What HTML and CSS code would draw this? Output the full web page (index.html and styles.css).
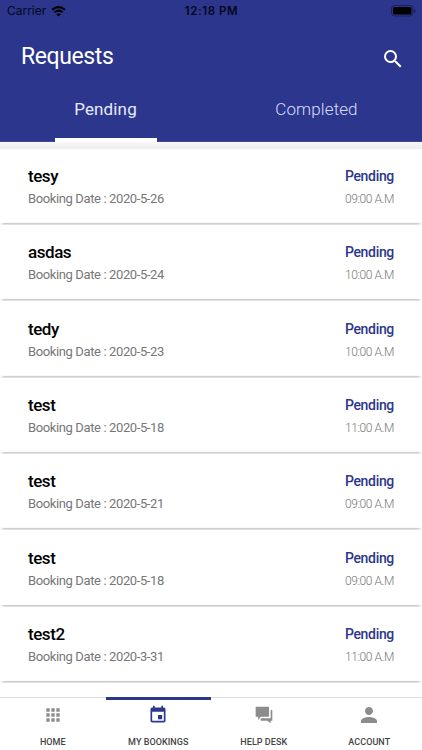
FILE: index.html
```html
<!DOCTYPE html>
<html lang="en">
<head>
<meta charset="utf-8">
<title>Requests</title>
<link rel="stylesheet" href="styles.css">
</head>
<body>
<div class="app">
  <header class="header">
    <div class="status">
      <div class="carrier"><span>Carrier</span>
        <svg class="wifi" viewBox="0 0 16 12"><path d="M8 11.500 10.500 8.900Q8 7 5.500 8.900Z"/><path d="M3.500 6.800Q8 3.300 12.500 6.800M1 4.100Q8 -1.700 15 4.100" fill="none" stroke="#000" stroke-width="2.300"/></svg>
      </div>
      <span class="clock">12:18 PM</span>
      <svg class="battery" viewBox="0 0 25 12"><rect x=".5" y=".5" width="21.500" height="10.500" rx="3" fill="none" stroke="#000" stroke-opacity=".4"/><rect x="2" y="2" width="18.500" height="7.500" rx="1.600"/><path d="M23.300 4v4q1.200-.6 1.200-2t-1.200-2" opacity=".5"/></svg>
    </div>
    <div class="titlebar">
      <h1>Requests</h1>
      <svg class="search" viewBox="0 0 24 24"><path d="M15.500 14h-.79l-.28-.27A6.471 6.471 0 0 0 16 9.500 6.500 6.500 0 1 0 9.500 16c1.610 0 3.090-.59 4.230-1.570l.27.28v.79l5 4.990L20.490 19l-4.990-5zm-6 0C7.010 14 5 11.990 5 9.500S7.010 5 9.500 5 14 7.010 14 9.500 11.990 14 9.500 14z"/></svg>
    </div>
    <nav class="tabs">
      <div class="tab active"><span>Pending</span></div>
      <div class="tab completed"><span>Completed</span></div>
    </nav>
  </header>
  <main class="list">
    <article class="row"><div><h2>tesy</h2><p>Booking Date : 2020-5-26</p></div><div class="side"><strong>Pending</strong><time>09:00 A.M</time></div></article>
    <article class="row"><div><h2>asdas</h2><p>Booking Date : 2020-5-24</p></div><div class="side"><strong>Pending</strong><time>10:00 A.M</time></div></article>
    <article class="row"><div><h2>tedy</h2><p>Booking Date : 2020-5-23</p></div><div class="side"><strong>Pending</strong><time>10:00 A.M</time></div></article>
    <article class="row"><div><h2>test</h2><p>Booking Date : 2020-5-18</p></div><div class="side"><strong>Pending</strong><time>11:00 A.M</time></div></article>
    <article class="row"><div><h2>test</h2><p>Booking Date : 2020-5-21</p></div><div class="side"><strong>Pending</strong><time>09:00 A.M</time></div></article>
    <article class="row"><div><h2>test</h2><p>Booking Date : 2020-5-18</p></div><div class="side"><strong>Pending</strong><time>09:00 A.M</time></div></article>
    <article class="row"><div><h2>test2</h2><p>Booking Date : 2020-3-31</p></div><div class="side"><strong>Pending</strong><time>11:00 A.M</time></div></article>
  </main>
  <nav class="bottom">
    <div class="item"><svg viewBox="0 0 24 24"><path d="M4 8h4V4H4v4zm6 12h4v-4h-4v4zm-6 0h4v-4H4v4zm0-6h4v-4H4v4zm6 0h4v-4h-4v4zm6-10v4h4V4h-4zm-6 4h4V4h-4v4zm6 6h4v-4h-4v4zm0 6h4v-4h-4v4z"/></svg><span>HOME</span></div>
    <div class="item current"><svg viewBox="0 0 24 24"><path d="M17 12h-5v5h5v-5zM16 1v2H8V1H6v2H5c-1.110 0-1.990.9-1.990 2L3 19a2 2 0 0 0 2 2h14c1.100 0 2-.9 2-2V5c0-1.100-.9-2-2-2h-1V1h-2zm3 18H5V8h14v11z"/></svg><span>MY BOOKINGS</span></div>
    <div class="item"><svg viewBox="0 0 24 24"><path d="M2 2h16v12H8l-3 4v-4H2zM20 6h2v13h-2v3l-4-3H8v-3h12z"/></svg><span>HELP DESK</span></div>
    <div class="item"><svg viewBox="2 2 20 20"><path d="M12 12c2.210 0 4-1.790 4-4s-1.790-4-4-4-4 1.790-4 4 1.790 4 4 4zm0 2c-2.670 0-8 1.340-8 4v2h16v-2c0-2.660-5.330-4-8-4z"/></svg><span>ACCOUNT</span></div>
  </nav>
</div>
</body>
</html>
```
FILE: styles.css
```css
* { box-sizing: border-box; }
body { margin: 0; font-family: Roboto, sans-serif; background: #fff; }
.app { width: 422px; height: 750px; display: flex; flex-direction: column; overflow: hidden; }
.header { height: 142px; flex: none; background: #2c368c; box-shadow: inset 0 -1px #494791; display: flex; flex-direction: column; }
.status { height: 22px; padding: 0 6px 0 7px; display: grid; grid-template-columns: 1fr auto 1fr; align-items: center; font: 12px/22px Inter, sans-serif; color: #05071c; }
.carrier { display: flex; align-items: center; gap: 5px; letter-spacing: -.02px; }
.wifi { width: 15px; height: 11px; }
.clock { font-weight: 600; font-size: 11.500px; letter-spacing: .6px; }
.battery { width: 25px; height: 12px; justify-self: end; }
.titlebar { height: 69px; padding: 0 17px 0 21px; display: flex; justify-content: space-between; align-items: center; }
h1 { margin: 1px 0 0; font-size: 23px; line-height: 28px; font-weight: 400; letter-spacing: -.4px; color: #fff; }
.search { width: 24px; height: 24px; fill: #fff; margin-top: 5px; }
.tabs { height: 51px; flex: none; display: grid; grid-template-columns: 1fr 1fr; }
.tab { display: flex; justify-content: center; font-size: 17px; line-height: 37px; letter-spacing: .15px; color: #e8eaff; }
.active span { width: 102px; height: 51px; text-align: center; border-bottom: 4px solid #fff; }
.completed { font-weight: 300; letter-spacing: .1px; color: #d8dcff; }
.list { flex: 1; min-height: 0; padding-top: 7px; background: linear-gradient(#f7f8fa, #eceef0 7px, #fff 8px); }
.row { height: 76.330px; padding: 16px 28px 0; display: flex; justify-content: space-between; background: linear-gradient(90deg, #fff, transparent 4px calc(100% - 4px), #fff), linear-gradient(#fff 73.400px, #cdcdcd 74.300px, #d8d8d8 75.300px, #fff 76.330px); }
h2 { margin: 0; font-size: 17px; line-height: 23px; font-weight: 500; letter-spacing: -.45px; color: #000; }
p { margin: 3px 0 0; font-size: 13px; line-height: 16px; letter-spacing: -.38px; color: #777; }
.side { display: flex; flex-direction: column; align-items: flex-end; }
.side strong { font-size: 14px; line-height: 22px; font-weight: 500; letter-spacing: -.32px; color: #2c368c; }
time { margin-top: 4px; font-size: 12px; line-height: 16px; font-weight: 300; letter-spacing: -.42px; color: #777; }
.bottom { height: 53px; flex: none; display: grid; grid-template-columns: repeat(4, 1fr); background: #fff; }
.item { border-top: 1px solid #dedede; padding-top: 7px; display: flex; flex-direction: column; align-items: center; }
.item svg { width: 20px; height: 20px; fill: #8c8c8c; }
.item span { margin-top: 11px; font-size: 9px; line-height: 12px; font-weight: 500; letter-spacing: .05px; color: #444; white-space: nowrap; }
.current { border-top: 3px solid #2c368c; padding-top: 5px; }
.current svg { fill: #2c368c; }
```
